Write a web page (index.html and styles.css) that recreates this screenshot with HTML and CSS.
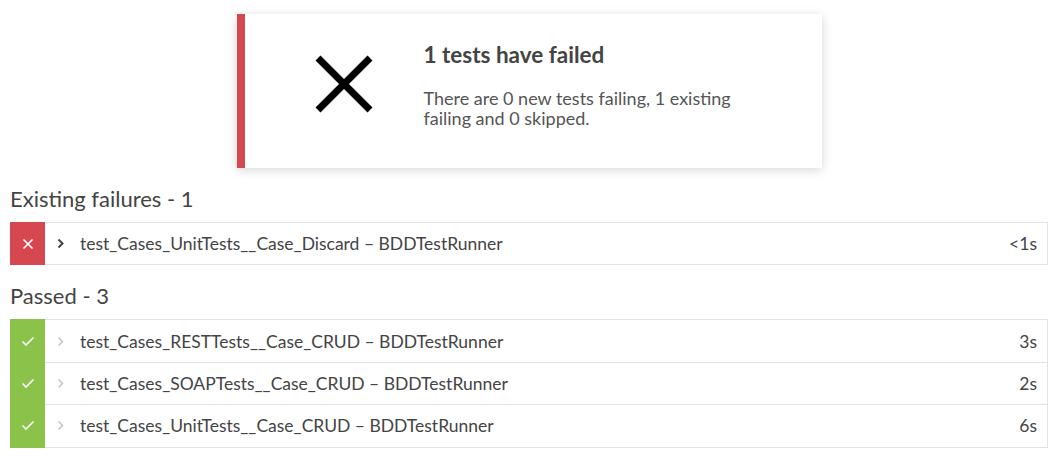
FILE: index.html
```html
<!DOCTYPE html>
<html>
<head>
<meta charset="utf-8">
<link rel="stylesheet" href="styles.css">
</head>
<body>
<div class="page">
  <div class="summary">
    <div class="summary-icon">
      <svg width="58" height="58" viewBox="0 0 58 58"><path d="M3 3 L55 55 M55 3 L3 55" stroke="#000" stroke-width="7" fill="none"/></svg>
    </div>
    <div class="summary-text">
      <div class="summary-title">1 tests have failed</div>
      <div class="summary-desc">There are 0 new tests failing, 1 existing failing and 0 skipped.</div>
    </div>
  </div>

  <h2 class="group-title">Existing failures - 1</h2>
  <div class="rows">
    <div class="row">
      <div class="status fail">
        <svg width="12" height="12" viewBox="0 0 12 12"><path d="M1.5 1.5 L10.5 10.5 M10.5 1.5 L1.5 10.5" stroke="#fff" stroke-width="1.6" fill="none"/></svg>
      </div>
      <div class="chev"><svg width="8" height="11" viewBox="0 0 8 11"><path d="M1.5 1.5 L5.5 5.5 L1.5 9.5" stroke="#444" stroke-width="2" fill="none"/></svg></div>
      <div class="name">test_Cases_UnitTests__Case_Discard – BDDTestRunner</div>
      <div class="dur">&lt;1s</div>
    </div>
  </div>

  <h2 class="group-title">Passed - 3</h2>
  <div class="rows">
    <div class="row">
      <div class="status pass">
        <svg width="14" height="11" viewBox="0 0 14 11"><path d="M1.5 5.5 L5 9 L12.5 1.5" stroke="#fff" stroke-width="1.6" fill="none"/></svg>
      </div>
      <div class="chev"><svg width="8" height="11" viewBox="0 0 8 11"><path d="M1.5 1.5 L5.5 5.5 L1.5 9.5" stroke="#c4c4c4" stroke-width="1.5" fill="none"/></svg></div>
      <div class="name">test_Cases_RESTTests__Case_CRUD – BDDTestRunner</div>
      <div class="dur">3s</div>
    </div>
    <div class="row">
      <div class="status pass">
        <svg width="14" height="11" viewBox="0 0 14 11"><path d="M1.5 5.5 L5 9 L12.5 1.5" stroke="#fff" stroke-width="1.6" fill="none"/></svg>
      </div>
      <div class="chev"><svg width="8" height="11" viewBox="0 0 8 11"><path d="M1.5 1.5 L5.5 5.5 L1.5 9.5" stroke="#c4c4c4" stroke-width="1.5" fill="none"/></svg></div>
      <div class="name">test_Cases_SOAPTests__Case_CRUD – BDDTestRunner</div>
      <div class="dur">2s</div>
    </div>
    <div class="row">
      <div class="status pass">
        <svg width="14" height="11" viewBox="0 0 14 11"><path d="M1.5 5.5 L5 9 L12.5 1.5" stroke="#fff" stroke-width="1.6" fill="none"/></svg>
      </div>
      <div class="chev"><svg width="8" height="11" viewBox="0 0 8 11"><path d="M1.5 1.5 L5.5 5.5 L1.5 9.5" stroke="#c4c4c4" stroke-width="1.5" fill="none"/></svg></div>
      <div class="name">test_Cases_UnitTests__Case_CRUD – BDDTestRunner</div>
      <div class="dur">6s</div>
    </div>
  </div>
</div>
</body>
</html>
```

FILE: styles.css
```css
html, body {
  margin: 0;
  padding: 0;
  background: #fff;
}
body {
  font-family: Lato, "Open Sans", sans-serif;
  color: #444;
}
.page {
  margin: 0 13px 0 10px;
  padding-top: 14px;
}
.summary {
  width: 585px;
  height: 154px;
  box-sizing: border-box;
  margin: 0 auto;
  border-left: 8px solid #d7474f;
  background: #fff;
  box-shadow: 0 2px 10px rgba(0, 0, 0, 0.16);
  display: flex;
  align-items: flex-start;
  padding: 29px 0 0 70px;
}
.summary-icon {
  width: 58px;
  height: 58px;
  margin-top: 12px;
  margin-right: 51px;
}
.summary-icon svg {
  display: block;
}
.summary-text {
  width: 330px;
}
.summary-title {
  font-size: 22.5px;
  font-weight: 700;
  line-height: 24px;
  color: #444;
}
.summary-desc {
  margin-top: 21px;
  font-size: 18px;
  line-height: 20px;
  color: #555;
}
.group-title {
  margin: 17.5px 0 10.5px;
  font-size: 22px;
  line-height: 26px;
  font-weight: 400;
  color: #444;
}
.rows {
  border: 1px solid #e3e3e3;
  border-left: none;
}
.row {
  display: flex;
  align-items: center;
  height: 41.4px;
  border-top: 1px solid #e3e3e3;
}
.row:first-child {
  border-top: none;
}
.status {
  width: 35px;
  align-self: stretch;
  display: flex;
  align-items: center;
  justify-content: center;
  margin-top: -1px;
  margin-bottom: -1px;
}
.status.fail {
  background: #d7474f;
}
.status.pass {
  background: #8bc34a;
}
.status svg, .chev svg {
  display: block;
}
.chev {
  margin-left: 12px;
  width: 8px;
  margin-right: 15px;
}
.name {
  flex: 1;
  font-size: 17.5px;
  color: #444;
}
.dur {
  font-size: 17.5px;
  color: #444;
  padding-right: 10px;
}
```
